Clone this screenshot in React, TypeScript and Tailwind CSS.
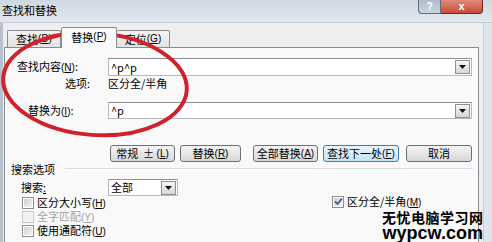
import type { ReactNode } from "react";

const Key = ({ k }: { k: string }) => (
  <span className="text-[10px] leading-none font-['Liberation_Sans',sans-serif]">
    (<span className="underline">{k}</span>)
  </span>
);

function Arrow() {
  return (
    <span className="flex h-[14px] w-[15px] shrink-0 items-center justify-center border border-[#8f8f8f] bg-gradient-to-b from-[#f6f6f6] to-[#d6d6d6]">
      <svg width="7" height="4" viewBox="0 0 7 4">
        <path d="M0 0h7L3.5 4z" fill="#111" />
      </svg>
    </span>
  );
}

function Combo({ value, className }: { value: string; className: string }) {
  return (
    <div
      className={`flex items-center border border-[#b5b8bd] border-t-[#8e9096] bg-white pl-[2px] pr-px ${className}`}
    >
      <span className="flex-1 leading-none">{value}</span>
      <Arrow />
    </div>
  );
}

function Btn({
  children,
  className,
  focus,
}: {
  children: ReactNode;
  className: string;
  focus?: boolean;
}) {
  return (
    <div
      className={`flex h-[17px] items-center justify-center rounded-[3px] border leading-none ${
        focus
          ? "border-[#3c7fb1] bg-gradient-to-b from-[#e9f6fd] to-[#c4e5f6]"
          : "border-[#707070] bg-gradient-to-b from-[#f4f4f4] to-[#d8d8d8]"
      } ${className}`}
    >
      {children}
    </div>
  );
}

function Check({ disabled, checked }: { disabled?: boolean; checked?: boolean }) {
  return (
    <span
      className={`flex h-[12px] w-[12px] shrink-0 items-center justify-center border ${
        disabled ? "border-[#c8c8c8] bg-[#f4f4f4]" : "border-[#8e8f8f] bg-white"
      }`}
    >
      <span
        className={`flex h-[8px] w-[8px] items-center justify-center ${
          disabled ? "bg-[#f0f0f0]" : "bg-gradient-to-br from-[#cfcfcf] to-[#f3f3f3]"
        }`}
      >
        {checked && (
          <svg width="9" height="9" viewBox="0 0 9 9" className="-m-px">
            <path d="M1 4.5 3.5 7 8 1.5" stroke="#3d5a98" strokeWidth="1.8" fill="none" />
          </svg>
        )}
      </span>
    </span>
  );
}

export default function App() {
  return (
    <div className="relative h-[242px] w-[492px] overflow-hidden bg-[#eeeeee] text-[11px] text-black font-['Noto_Sans_CJK_SC',sans-serif]">
      {/* title bar */}
      <div className="flex h-[23px] items-start bg-gradient-to-b from-[#cfd8e2] to-[#e3e8ee] border-b border-[#c5ccd4]">
        <span className="pl-[2px] pt-[3px] leading-[14px]">查找和替换</span>
        <div className="ml-auto mr-[9px] flex">
          <div className="flex h-[14px] w-[23px] items-center justify-center rounded-bl-[4px] border border-t-0 border-[#5f6d7d] bg-gradient-to-b from-[#aebccc] to-[#c9d4e0] text-[11px] font-bold leading-none text-white font-['Liberation_Sans',sans-serif]">
            ?
          </div>
          <div className="flex h-[14px] w-[42px] items-center justify-center rounded-br-[4px] border border-l-0 border-t-0 border-[#6b2b23] bg-gradient-to-b from-[#e0897c] to-[#c64a37] text-[11px] font-bold leading-none text-white font-['Liberation_Sans',sans-serif]">
            x
          </div>
        </div>
      </div>

      <div className="flex">
        <div className="w-[3px] self-stretch bg-[#b8c2cc]" />
        <div className="w-[476px]">
          {/* tabs */}
          <div className="flex h-[24px] items-end pl-[4px]">
            <div className="flex h-[17px] w-[54px] items-center justify-center rounded-t-[2px] border border-b-0 border-[#898c95] bg-gradient-to-b from-[#f4f4f4] to-[#e2e2e2] leading-none">
              查找<Key k="D" />
            </div>
            <div className="relative z-10 -mb-px flex h-[21px] w-[56px] items-start justify-center rounded-t-[2px] border border-b-0 border-[#898c95] bg-[#f9f9f9] pt-[4px] leading-none">
              替换<Key k="P" />
            </div>
            <div className="flex h-[17px] w-[53px] items-center justify-center rounded-t-[2px] border border-b-0 border-l-0 border-[#898c95] bg-gradient-to-b from-[#f4f4f4] to-[#e2e2e2] leading-none">
              定位<Key k="G" />
            </div>
          </div>

          {/* panel */}
          <div className="ml-px h-[200px] border border-[#898c95] bg-[#f9f9f9]">
            <div className="mt-[10px] flex items-center">
              <span className="w-[103px] pl-[12px] leading-none">
                查找内容<Key k="N" />:
              </span>
              <Combo value="^p^p" className="h-[18px] w-[364px]" />
            </div>
            <div className="flex h-[14px] items-center">
              <span className="w-[103px] pl-[60px] leading-none">选项:</span>
              <span className="leading-none">区分全/半角</span>
            </div>
            <div className="mt-[12px] flex items-center">
              <span className="w-[103px] pl-[23px] leading-none">
                替换为<Key k="I" />:
              </span>
              <Combo value="^p" className="h-[17px] w-[364px]" />
            </div>

            <div className="mt-[26px] flex pl-[105px]">
              <Btn className="w-[65px]">
                常规&nbsp;&nbsp;±&nbsp;<Key k="L" />
              </Btn>
              <Btn className="ml-[5px] w-[61px]">
                替换<Key k="R" />
              </Btn>
              <Btn className="ml-[12px] w-[65px]">
                全部替换<Key k="A" />
              </Btn>
              <Btn className="ml-[5px] w-[76px]" focus>
                查找下一处<Key k="F" />
              </Btn>
              <Btn className="ml-[7px] w-[66px]">取消</Btn>
            </div>

            <div className="flex h-[14px] items-center">
              <span className="pl-[6px] leading-none">搜索选项</span>
              <span className="ml-[10px] mr-[5px] h-[2px] flex-1 border-t border-b border-t-[#d5dde4] border-b-white" />
            </div>
            <div className="mt-[3px] flex items-center">
              <span className="w-[103px] pl-[16px] leading-none">
                搜索<span className="underline">:</span>
              </span>
              <Combo value="全部" className="h-[17px] w-[70px]" />
            </div>

            <div className="flex h-[14px] items-center pl-[17px]">
              <div className="flex w-[310px] items-center">
                <Check />
                <span className="ml-[3px] leading-none">
                  区分大小写<Key k="H" />
                </span>
              </div>
              <div className="-mt-[3px] flex items-center">
                <Check checked />
                <span className="ml-[3px] leading-none">
                  区分全/半角<Key k="M" />
                </span>
              </div>
            </div>
            <div className="flex h-[14px] items-center pl-[17px] text-[#a3a3a3]">
              <Check disabled />
              <span className="ml-[3px] leading-none">
                全字匹配<Key k="Y" />
              </span>
            </div>
            <div className="flex h-[14px] items-center pl-[17px]">
              <Check />
              <span className="ml-[3px] leading-none">
                使用通配符<Key k="U" />
              </span>
            </div>
          </div>
        </div>
        <div className="ml-[4px] w-[9px] self-stretch border-l border-[#c7cfd8] bg-[#dfe5ec]" />
      </div>

      {/* hand-drawn annotation */}
      <svg className="pointer-events-none absolute left-0 top-0" width="492" height="242">
        <ellipse cx="95" cy="84" rx="92" ry="51" transform="rotate(4 95 84)" fill="none" stroke="#d0222a" strokeWidth="4" />
      </svg>

      {/* watermark */}
      <div className="absolute left-[382px] top-[210px] flex flex-col items-center font-bold">
        <span className="text-[14px] leading-[15px] tracking-[0.5px]">无忧电脑学习网</span>
        <span className="text-[18px] leading-[17px] font-['Liberation_Sans',sans-serif]">wypcw.com</span>
      </div>
    </div>
  );
}
